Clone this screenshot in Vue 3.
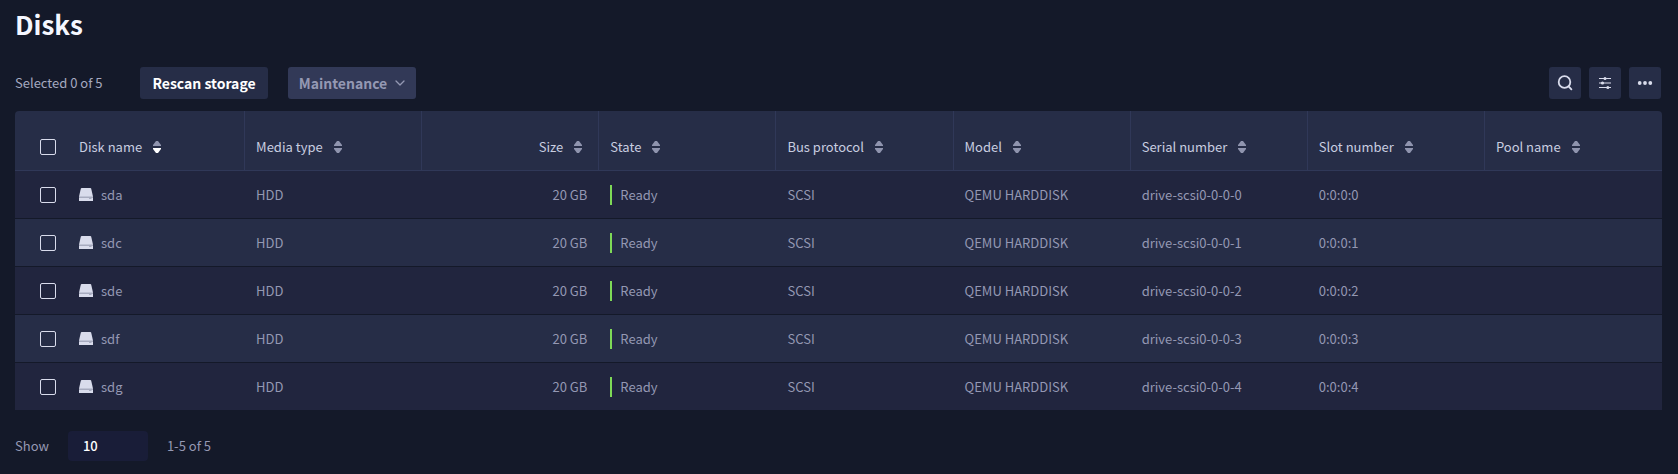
<script setup>
import { ref } from 'vue'

const columns = [
  { key: 'name', label: 'Disk name', sorted: true },
  { key: 'media', label: 'Media type' },
  { key: 'size', label: 'Size', right: true },
  { key: 'state', label: 'State' },
  { key: 'bus', label: 'Bus protocol' },
  { key: 'model', label: 'Model' },
  { key: 'serial', label: 'Serial number' },
  { key: 'slot', label: 'Slot number' },
  { key: 'pool', label: 'Pool name' },
]

const disks = ['sda', 'sdc', 'sde', 'sdf', 'sdg'].map((name, i) => ({
  name,
  media: 'HDD',
  size: '20 GB',
  state: 'Ready',
  bus: 'SCSI',
  model: 'QEMU HARDDISK',
  serial: `drive-scsi0-0-0-${i}`,
  slot: `0:0:0:${i}`,
  pool: '',
}))

const selected = ref([])
const pageSize = ref('10')

function toggleAll(event) {
  selected.value = event.target.checked ? disks.map((d) => d.name) : []
}
</script>

<template>
  <main class="page">
    <h1>Disks</h1>

    <div class="toolbar">
      <span class="count">Selected {{ selected.length }} of {{ disks.length }}</span>
      <button type="button" class="btn">Rescan storage</button>
      <button type="button" class="btn muted" disabled>
        Maintenance
        <svg width="10" height="6" viewBox="0 0 10 6" aria-hidden="true">
          <path d="M1 1l4 4 4-4" fill="none" stroke="currentColor" stroke-width="1.3" stroke-linecap="round" stroke-linejoin="round" />
        </svg>
      </button>
      <div class="tools">
        <button type="button" class="icon-btn" aria-label="Search">
          <svg width="16" height="16" viewBox="0 0 16 16" aria-hidden="true">
            <g fill="none" stroke="currentColor" stroke-width="1.8" stroke-linecap="round">
              <circle cx="7.5" cy="7" r="5.8" />
              <path d="M11.6 11.4l2.8 3" />
            </g>
          </svg>
        </button>
        <button type="button" class="icon-btn" aria-label="Table settings">
          <svg width="16" height="16" viewBox="0 0 16 16" aria-hidden="true">
            <path d="M2 3h12v1H2zM2 12h12v1H2z" fill="currentColor" />
            <path d="M2 7h12v2H2z" fill="currentColor" opacity="0.5" />
            <g fill="currentColor">
              <circle cx="8" cy="3.5" r="1.5" />
              <circle cx="5.5" cy="8" r="1.6" />
              <circle cx="10.8" cy="12.5" r="1.5" />
            </g>
          </svg>
        </button>
        <button type="button" class="icon-btn" aria-label="More actions">
          <svg width="16" height="16" viewBox="0 0 16 16" aria-hidden="true">
            <g fill="currentColor">
              <circle cx="2.7" cy="8" r="1.9" />
              <circle cx="8" cy="8" r="1.9" />
              <circle cx="13.3" cy="8" r="1.9" />
            </g>
          </svg>
        </button>
      </div>
    </div>

    <table>
      <colgroup>
        <col class="col-check" />
        <col v-for="c in columns" :key="c.key" />
      </colgroup>
      <thead>
        <tr>
          <th class="check">
            <input type="checkbox" aria-label="Select all disks" :checked="selected.length === disks.length" @change="toggleAll" />
          </th>
          <th v-for="c in columns" :key="c.key" scope="col" :class="{ right: c.right }">
            <button type="button" class="sort">
              {{ c.label }}
              <svg width="8" height="12" viewBox="0 0 8 12" aria-hidden="true">
                <path class="arrow" d="M0 5V4l3-4h2l3 4v1z" />
                <path class="arrow" :class="{ active: c.sorted }" d="M0 7v1l3 4h2l3-4V7z" />
              </svg>
            </button>
          </th>
        </tr>
      </thead>
      <tbody>
        <tr v-for="d in disks" :key="d.name">
          <td class="check">
            <input v-model="selected" type="checkbox" :value="d.name" :aria-label="`Select ${d.name}`" />
          </td>
          <td v-for="c in columns" :key="c.key" :class="{ right: c.right }">
            <span v-if="c.key === 'name'" class="disk">
              <svg width="14" height="13" viewBox="0 0 14 13" aria-hidden="true">
                <path d="M2.6 0h8.8Q12 0 12.2 .8L14 8.5V13H0V8.5L1.8 .8Q2 0 2.6 0z" fill="#d9dcec" />
                <path d="M0 8.4h14V10h-1.5v1h-2.5v-1H0z" fill="#a7abbf" />
              </svg>
              {{ d.name }}
            </span>
            <span v-else-if="c.key === 'state'" class="state">{{ d.state }}</span>
            <template v-else>{{ d[c.key] }}</template>
          </td>
        </tr>
      </tbody>
    </table>

    <footer class="pager">
      <label for="page-size">Show</label>
      <select id="page-size" v-model="pageSize">
        <option>10</option>
        <option>25</option>
        <option>50</option>
      </select>
      <span>1-5 of 5</span>
    </footer>
  </main>
</template>

<style>
body {
  background: #141929;
}
</style>

<style scoped>
.page {
  padding: 4px 16px 12px 15px;
  background: #141929;
  color: #9498b3;
  font-family: "Noto Sans CJK SC", "Noto Sans", sans-serif;
  font-size: 13px;
  line-height: 20px;
}

h1 {
  margin: 0 0 23px;
  color: #f5f7ff;
  font-size: 26px;
  font-weight: 700;
  line-height: 40px;
}

button,
select {
  font: inherit;
}

.toolbar {
  display: flex;
  align-items: center;
  gap: 20px;
  margin-bottom: 12px;
}

.count {
  min-width: 105px;
  color: #a5a9c0;
}

.btn {
  display: flex;
  align-items: center;
  justify-content: center;
  gap: 8px;
  min-width: 128px;
  height: 32px;
  padding: 0 8px;
  border: 0;
  border-radius: 3px;
  background: #262d47;
  color: #fff;
  font-size: 14px;
  font-weight: 700;
  white-space: nowrap;
}

.btn.muted {
  background: #323957;
  color: #9498b3;
}

.tools {
  display: flex;
  gap: 8px;
  margin-left: auto;
  padding-right: 1px;
}

.icon-btn {
  display: grid;
  place-items: center;
  width: 32px;
  height: 32px;
  padding: 0;
  border: 0;
  border-radius: 3px;
  background: #262d47;
  color: #d9dcec;
}

table {
  width: 100%;
  table-layout: fixed;
  border-collapse: separate;
  border-spacing: 0;
}

.col-check {
  width: 53px;
}

th {
  height: 47px;
  padding: 12px 12px 0 11px;
  border-right: 1px solid #303858;
  border-bottom: 1px solid #303858;
  background: #262d47;
  color: #c9cde0;
  font-weight: 400;
  text-align: left;
}

th.check,
th:last-child {
  border-right: 0;
}

th:first-child {
  border-top-left-radius: 4px;
}

th:last-child {
  border-top-right-radius: 4px;
}

td {
  height: 47px;
  padding: 0 12px 0 11px;
  border-bottom: 1px solid #141929;
  background: #21253e;
  white-space: nowrap;
}

tbody tr:nth-child(even) td {
  background: #262d47;
}

th.check,
td.check {
  padding-left: 25px;
  padding-right: 0;
}

th.right,
td.right {
  text-align: right;
}

.sort {
  display: inline-flex;
  align-items: center;
  gap: 11px;
  padding: 0 4px 0 0;
  border: 0;
  background: none;
  color: inherit;
  white-space: nowrap;
}

.arrow {
  fill: #8f94ae;
}

.arrow.active {
  fill: #fff;
}

input[type="checkbox"] {
  display: block;
  appearance: none;
  width: 16px;
  height: 16px;
  margin: 0;
  border: 1px solid #d9dcec;
  border-radius: 2px;
}

input[type="checkbox"]:checked {
  background: #d9dcec;
}

.disk {
  display: flex;
  align-items: center;
  gap: 8px;
}

.state {
  display: inline-block;
  padding-left: 8px;
  border-left: 2px solid #7ed957;
}

.pager {
  display: flex;
  align-items: center;
  gap: 19px;
  margin-top: 20px;
}

.pager select {
  appearance: none;
  width: 80px;
  height: 30px;
  padding: 0 15px;
  border: 0;
  border-radius: 4px;
  background: #191d38;
  color: #fff;
  font-weight: 500;
}
</style>
